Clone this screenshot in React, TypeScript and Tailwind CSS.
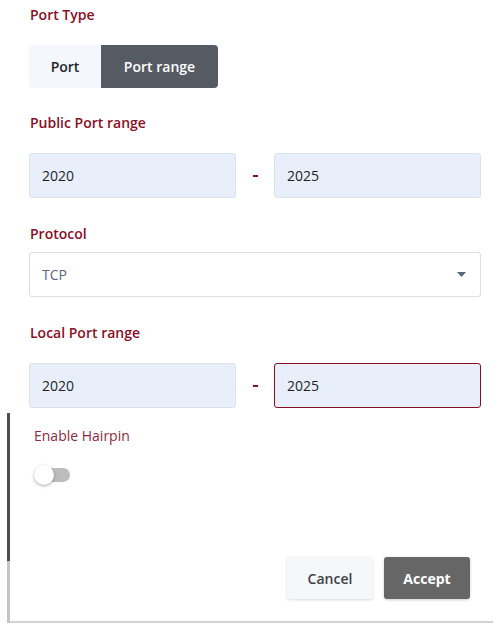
import React from "react";

const font = { fontFamily: '"Open Sans", "Noto Sans", sans-serif' };

function Label({ children }: { children: React.ReactNode }) {
  return <div className="text-[14px] leading-[20px] font-semibold text-[#8a0f24]">{children}</div>;
}

function Input({ value, error }: { value: string; error?: boolean }) {
  return (
    <div
      className={`flex-1 h-[45px] rounded-[3px] bg-[#e8effb] flex items-center pl-[12px] text-[14px] text-[#1f1f1f] border ${
        error ? "border-[#8a0f24]" : "border-[#dbe2ee]"
      }`}
    >
      {value}
    </div>
  );
}

function RangeRow({ a, b, err }: { a: string; b: string; err?: boolean }) {
  return (
    <div className="flex items-center">
      <Input value={a} />
      <div className="w-[38px] flex justify-center">
        <div className="w-[5px] h-[2px] bg-[#8a0f24]" />
      </div>
      <Input value={b} error={err} />
    </div>
  );
}

export default function App() {
  return (
    <div className="w-[503px] h-[632px] bg-white overflow-hidden relative" style={font}>
      <div className="pl-[29px] pr-[22px] pt-[5px]">
        <div className="pl-[1px]"><Label>Port Type</Label></div>
        <div className="mt-[20px] flex h-[43px] w-[189px] rounded-[4px] overflow-hidden text-[14px] font-semibold">
          <div className="w-[72px] bg-[#f4f7fb] text-[#23272d] flex items-center justify-center">Port</div>
          <div className="flex-1 bg-[#565b63] text-white flex items-center justify-center">Port range</div>
        </div>
        <div className="mt-[25px] pl-[1px]"><Label>Public Port range</Label></div>
        <div className="mt-[20px]">
          <RangeRow a="2020" b="2025" />
        </div>
        <div className="mt-[26px] pl-[1px]"><Label>Protocol</Label></div>
        <div className="mt-[8px] h-[45px] rounded-[3px] border border-[#dcdee2] bg-white flex items-center justify-between pl-[12px] pr-[14px]">
          <span className="text-[14px] text-[#5b6684]">TCP</span>
          <svg width="9" height="5" viewBox="0 0 9 5"><path d="M0 0 L9 0 L4.5 5 Z" fill="#5b6684" /></svg>
        </div>
        <div className="mt-[26px] pl-[1px]"><Label>Local Port range</Label></div>
        <div className="mt-[20px]">
          <RangeRow a="2020" b="2025" err />
        </div>
      </div>
      <div className="mt-[5px] ml-[7px] w-[486px] flex h-[210px]">
        <div className="w-[3px] flex flex-col">
          <div className="h-[148px] bg-[#4d4d4f]" />
          <div className="flex-1 bg-[#c3c3ca]" />
        </div>
        <div className="flex-1 flex flex-col border-b-2 border-[#d2d2d8]">
          <div className="pl-[24px] pt-[13px] text-[14px] leading-[20px] font-medium text-[#8e2a3b]">Enable Hairpin</div>
          <div className="pl-[25px] mt-[19px] relative h-[20px]">
            <div className="absolute left-[25px] top-[3px] w-[35px] h-[14px] rounded-full bg-[#bdbdbd]" />
            <div className="absolute left-[24px] top-0 w-[20px] h-[20px] rounded-full bg-white shadow-[0_1px_3px_rgba(0,0,0,0.35)]" />
          </div>
          <div className="flex-1" />
          <div className="flex justify-end gap-[11px] pr-[23px] pb-[22px]">
            <div className="w-[86px] h-[42px] rounded-[3px] bg-[#f5f8fb] shadow-[0_1px_3px_rgba(0,0,0,0.15)] flex items-center justify-center text-[14px] font-semibold text-[#3c4148]">Cancel</div>
            <div className="w-[86px] h-[42px] rounded-[3px] bg-[#666666] shadow-[0_1px_3px_rgba(0,0,0,0.2)] flex items-center justify-center text-[14px] font-bold text-white">Accept</div>
          </div>
        </div>
      </div>
    </div>
  );
}
